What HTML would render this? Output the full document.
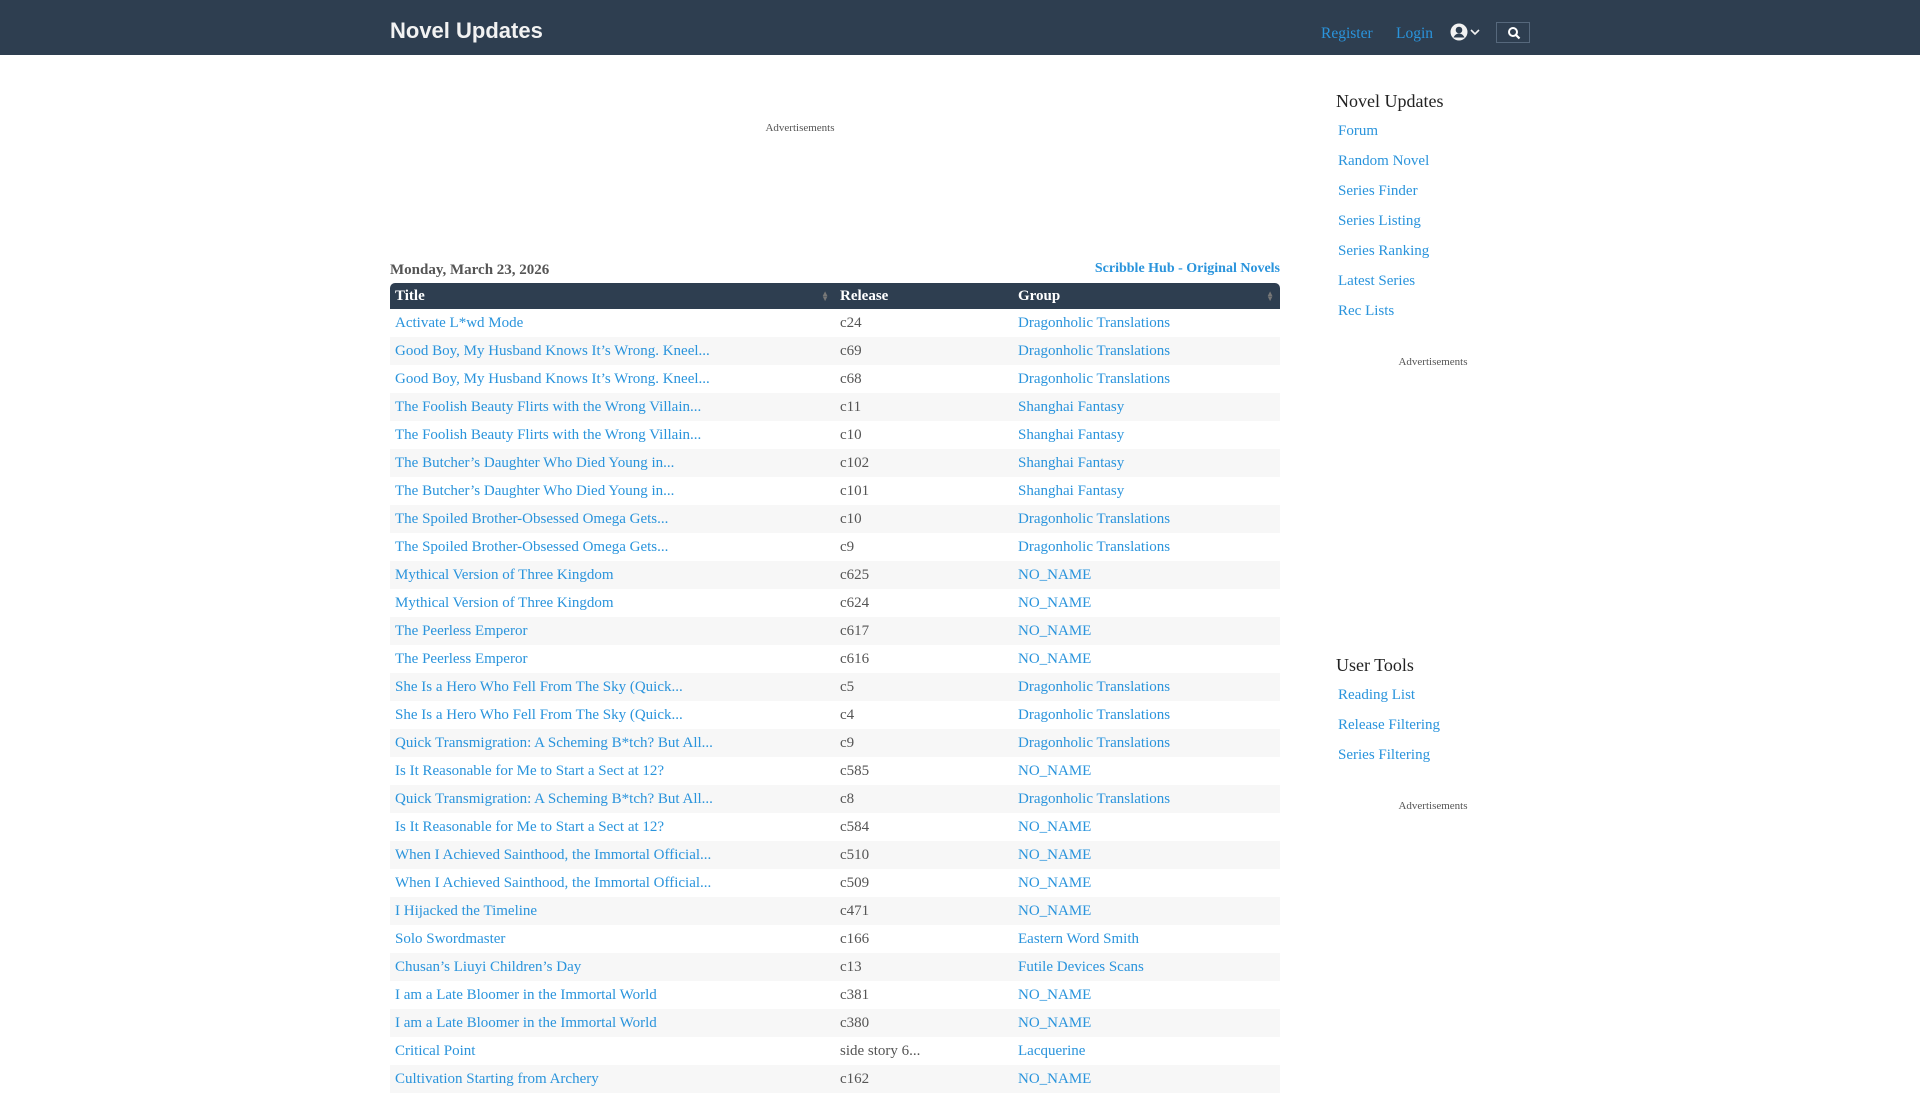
<!DOCTYPE html>
<html><head><meta charset="utf-8"><style>
*{margin:0;padding:0;box-sizing:border-box}
body{width:1920px;height:1080px;overflow:hidden;background:#fff;font-family:"Liberation Serif",serif;color:#555}
a{color:#2a94dc;text-decoration:none}
.hdr{position:absolute;left:0;top:0;width:1920px;height:55px;background:#2e3e50}
.logo{position:absolute;left:390px;top:18px;font:bold 22px "Liberation Sans",sans-serif;color:#f2f2f2}
.nav{position:absolute;top:25px;font-size:15.5px;color:#2a94dc}
.sbox{position:absolute;left:1496px;top:22px;width:34px;height:21px;border:1px solid #56687c}
.ad{position:absolute;font-size:11px;color:#555;text-align:center;width:200px}
.date{position:absolute;left:390px;top:262px;font-weight:bold;font-size:15px;color:#555}
.sh{position:absolute;right:640px;top:261px;font-weight:bold;font-size:14px;color:#2a94dc}
table{position:absolute;left:390px;top:283px;width:890px;border-collapse:collapse;font-size:15px}
th{background:#2e3e50;color:#fff;text-align:left;height:26px;font-size:15px;padding-left:5px;position:relative}
th:first-child{border-top-left-radius:5px}th:last-child{border-top-right-radius:5px}
td{height:28px;padding-left:5px;white-space:nowrap}
tr:nth-child(odd) td{background:#f7f7f7}
.ar{position:absolute;right:6px;top:8px;font-size:8px;line-height:5px;color:#777}
.side{position:absolute;left:1336px;font-size:15px}
.side h3{font-weight:normal;font-size:18px;color:#222;margin-bottom:4px}
.side a{display:block;height:30px;line-height:30px;padding-left:2px}
</style></head><body>
<div class="hdr">
<div class="logo">Novel Updates</div>
<div class="nav" style="left:1321px">Register</div>
<div class="nav" style="left:1396px">Login</div>
<svg style="position:absolute;left:1450px;top:22px" width="34" height="20" viewBox="0 0 34 20"><circle cx="9" cy="10" r="8.5" fill="#f2f2f2"/><circle cx="9" cy="8" r="3.3" fill="#2e3e50"/><path d="M3.5 15.5c1.5-3 3.5-4 5.5-4s4 1 5.5 4" fill="#2e3e50"/><path d="M21 8l4 4 4-4" stroke="#f2f2f2" stroke-width="1.6" fill="none"/></svg>
<div class="sbox"><svg style="position:absolute;left:10px;top:3px" width="14" height="14" viewBox="0 0 14 14"><circle cx="6" cy="6" r="4" stroke="#fff" stroke-width="2" fill="none"/><path d="M9 9l3.5 3.5" stroke="#fff" stroke-width="2.2"/></svg></div>
</div>
<div class="ad" style="left:700px;top:122px">Advertisements</div>
<div class="date">Monday, March 23, 2026</div>
<div class="sh">Scribble Hub - Original Novels</div>
<table>
<tr><th style="width:445px">Title<span class="ar">▲<br>▼</span></th><th style="width:178px">Release</th><th>Group<span class="ar">▲<br>▼</span></th></tr>
<tr><td><a>Activate L*wd Mode</a></td><td>c24</td><td><a>Dragonholic Translations</a></td></tr>
<tr><td><a>Good Boy, My Husband Knows It’s Wrong. Kneel...</a></td><td>c69</td><td><a>Dragonholic Translations</a></td></tr>
<tr><td><a>Good Boy, My Husband Knows It’s Wrong. Kneel...</a></td><td>c68</td><td><a>Dragonholic Translations</a></td></tr>
<tr><td><a>The Foolish Beauty Flirts with the Wrong Villain...</a></td><td>c11</td><td><a>Shanghai Fantasy</a></td></tr>
<tr><td><a>The Foolish Beauty Flirts with the Wrong Villain...</a></td><td>c10</td><td><a>Shanghai Fantasy</a></td></tr>
<tr><td><a>The Butcher’s Daughter Who Died Young in...</a></td><td>c102</td><td><a>Shanghai Fantasy</a></td></tr>
<tr><td><a>The Butcher’s Daughter Who Died Young in...</a></td><td>c101</td><td><a>Shanghai Fantasy</a></td></tr>
<tr><td><a>The Spoiled Brother-Obsessed Omega Gets...</a></td><td>c10</td><td><a>Dragonholic Translations</a></td></tr>
<tr><td><a>The Spoiled Brother-Obsessed Omega Gets...</a></td><td>c9</td><td><a>Dragonholic Translations</a></td></tr>
<tr><td><a>Mythical Version of Three Kingdom</a></td><td>c625</td><td><a>NO_NAME</a></td></tr>
<tr><td><a>Mythical Version of Three Kingdom</a></td><td>c624</td><td><a>NO_NAME</a></td></tr>
<tr><td><a>The Peerless Emperor</a></td><td>c617</td><td><a>NO_NAME</a></td></tr>
<tr><td><a>The Peerless Emperor</a></td><td>c616</td><td><a>NO_NAME</a></td></tr>
<tr><td><a>She Is a Hero Who Fell From The Sky (Quick...</a></td><td>c5</td><td><a>Dragonholic Translations</a></td></tr>
<tr><td><a>She Is a Hero Who Fell From The Sky (Quick...</a></td><td>c4</td><td><a>Dragonholic Translations</a></td></tr>
<tr><td><a>Quick Transmigration: A Scheming B*tch? But All...</a></td><td>c9</td><td><a>Dragonholic Translations</a></td></tr>
<tr><td><a>Is It Reasonable for Me to Start a Sect at 12?</a></td><td>c585</td><td><a>NO_NAME</a></td></tr>
<tr><td><a>Quick Transmigration: A Scheming B*tch? But All...</a></td><td>c8</td><td><a>Dragonholic Translations</a></td></tr>
<tr><td><a>Is It Reasonable for Me to Start a Sect at 12?</a></td><td>c584</td><td><a>NO_NAME</a></td></tr>
<tr><td><a>When I Achieved Sainthood, the Immortal Official...</a></td><td>c510</td><td><a>NO_NAME</a></td></tr>
<tr><td><a>When I Achieved Sainthood, the Immortal Official...</a></td><td>c509</td><td><a>NO_NAME</a></td></tr>
<tr><td><a>I Hijacked the Timeline</a></td><td>c471</td><td><a>NO_NAME</a></td></tr>
<tr><td><a>Solo Swordmaster</a></td><td>c166</td><td><a>Eastern Word Smith</a></td></tr>
<tr><td><a>Chusan’s Liuyi Children’s Day</a></td><td>c13</td><td><a>Futile Devices Scans</a></td></tr>
<tr><td><a>I am a Late Bloomer in the Immortal World</a></td><td>c381</td><td><a>NO_NAME</a></td></tr>
<tr><td><a>I am a Late Bloomer in the Immortal World</a></td><td>c380</td><td><a>NO_NAME</a></td></tr>
<tr><td><a>Critical Point</a></td><td>side story 6...</td><td><a>Lacquerine</a></td></tr>
<tr><td><a>Cultivation Starting from Archery</a></td><td>c162</td><td><a>NO_NAME</a></td></tr>
</table>
<div class="side" style="top:91px"><h3>Novel Updates</h3><a>Forum</a><a>Random Novel</a><a>Series Finder</a><a>Series Listing</a><a>Series Ranking</a><a>Latest Series</a><a>Rec Lists</a></div>
<div class="ad" style="left:1333px;top:356px">Advertisements</div>
<div class="side" style="top:655px"><h3>User Tools</h3><a>Reading List</a><a>Release Filtering</a><a>Series Filtering</a></div>
<div class="ad" style="left:1333px;top:800px">Advertisements</div>
</body></html>
